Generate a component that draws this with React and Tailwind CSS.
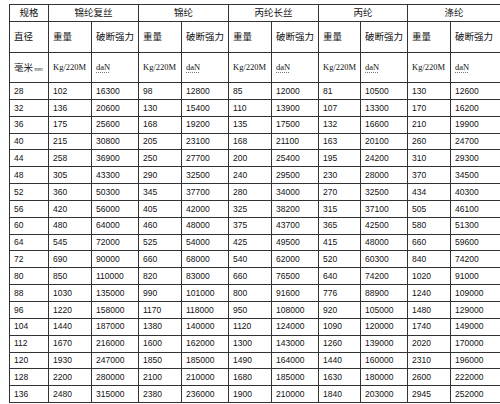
import React from "react";

const groups = ["锦纶复丝", "锦纶", "丙纶长丝", "丙纶", "涤纶"];

const rows = [
  [28, 102, 16300, 98, 12800, 85, 12000, 81, 10500, 130, 12600],
  [32, 136, 20600, 130, 15400, 110, 13900, 107, 13300, 170, 16200],
  [36, 175, 25600, 168, 19200, 135, 17500, 132, 16600, 210, 19900],
  [40, 215, 30800, 205, 23100, 168, 21100, 163, 20100, 260, 24700],
  [44, 258, 36900, 250, 27700, 200, 25400, 195, 24200, 310, 29300],
  [48, 305, 43300, 290, 32500, 240, 29500, 230, 28000, 370, 34500],
  [52, 360, 50300, 345, 37700, 280, 34000, 270, 32500, 434, 40300],
  [56, 420, 56000, 405, 42000, 325, 38200, 315, 37100, 505, 46100],
  [60, 480, 64000, 460, 48000, 375, 43700, 365, 42500, 580, 51300],
  [64, 545, 72000, 525, 54000, 425, 49500, 415, 48000, 660, 59600],
  [72, 690, 90000, 660, 68000, 540, 62000, 520, 60300, 840, 74200],
  [80, 850, 110000, 820, 83000, 660, 76500, 640, 74200, 1020, 91000],
  [88, 1030, 135000, 990, 101000, 800, 91600, 776, 88900, 1240, 109000],
  [96, 1220, 158000, 1170, 118000, 950, 108000, 920, 105000, 1480, 129000],
  [104, 1440, 187000, 1380, 140000, 1120, 124000, 1090, 120000, 1740, 149000],
  [112, 1670, 216000, 1600, 162000, 1300, 143000, 1260, 139000, 2020, 170000],
  [120, 1930, 247000, 1850, 185000, 1490, 164000, 1440, 160000, 2310, 196000],
  [128, 2200, 280000, 2100, 210000, 1680, 185000, 1630, 180000, 2600, 222000],
  [136, 2480, 315000, 2380, 236000, 1900, 210000, 1840, 203000, 2945, 252000],
];

const widths = [39, 43, 47, 43, 47, 43, 47, 42, 47, 43, 50];

const cjk = "[font-family:'Noto_Sans_CJK_SC',sans-serif] text-[9.5px] leading-none";
const cell = "border border-[#333] px-[4px] p-0 align-middle whitespace-nowrap";
const num = "font-['Liberation_Sans',sans-serif] text-[8.5px] leading-none";
const serif = "font-['Liberation_Serif',serif] text-[8.5px] leading-none";

export default function App() {
  return (
    <div className="w-[500px] h-[404px] overflow-hidden bg-white pt-[4px] pl-[9px] text-[#111]">
      <table className="table-fixed border-collapse w-[491px]">
        <colgroup>
          {widths.map((w, i) => (
            <col key={i} style={{ width: w }} />
          ))}
        </colgroup>
        <tbody>
          <tr className="h-[17px]">
            <td className={`${cell} ${cjk} text-center`}>规格</td>
            {groups.map((g) => (
              <td key={g} colSpan={2} className={`${cell} ${cjk} text-center`}>
                {g}
              </td>
            ))}
          </tr>
          <tr className="h-[31px]">
            <td className={`${cell} ${cjk}`}>直径</td>
            {groups.map((g) => (
              <React.Fragment key={g}>
                <td className={`${cell} ${cjk}`}>重量</td>
                <td className={`${cell} ${cjk}`}>破断强力</td>
              </React.Fragment>
            ))}
          </tr>
          <tr className="h-[30px]">
            <td className={`${cell} ${cjk}`}>
              毫米<span className="text-[5px] font-['Liberation_Sans',sans-serif]"> mm</span>
            </td>
            {groups.map((g) => (
              <React.Fragment key={g}>
                <td className={`${cell} ${serif}`}>Kg/220M</td>
                <td className={`${cell} ${serif}`}>
                  <span className="underline decoration-dotted decoration-[#777] underline-offset-2">daN</span>
                </td>
              </React.Fragment>
            ))}
          </tr>
          {rows.map((r) => (
            <tr key={r[0]} className="h-[16.85px]">
              {r.map((v, i) => (
                <td key={i} className={`${cell} ${num}`}>
                  {v}
                </td>
              ))}
            </tr>
          ))}
        </tbody>
      </table>
    </div>
  );
}
